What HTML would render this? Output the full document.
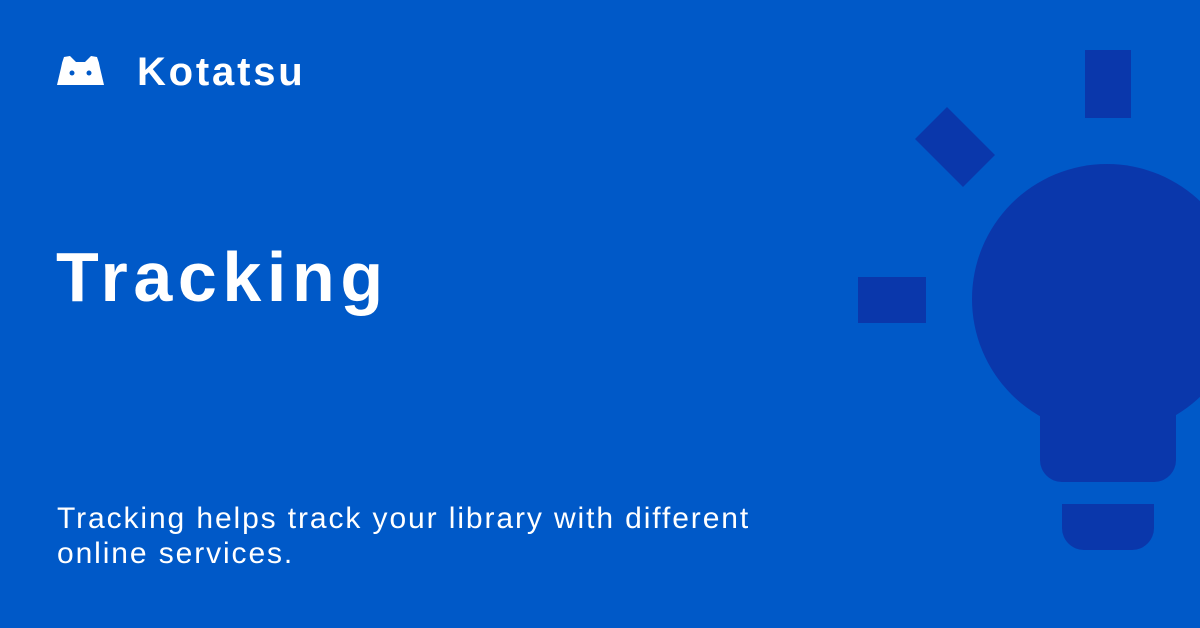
<!DOCTYPE html>
<html><head><meta charset="utf-8"><style>
html,body{margin:0;padding:0}
body{width:1200px;height:628px;background:#0059c8;position:relative;overflow:hidden;font-family:"Liberation Sans",sans-serif;color:#fff}
.t{position:absolute;white-space:nowrap}
</style></head><body>
<svg width="1200" height="628" style="position:absolute;left:0;top:0">
<g fill="#0a37ab">
<rect x="1085" y="50" width="46" height="68"/>
<polygon points="915,139 947,107 995,155 963,187"/>
<rect x="858" y="277" width="68" height="46"/>
<circle cx="1107" cy="299" r="135"/>
<path d="M1040 370 H1176 V460 a22 22 0 0 1 -22 22 H1062 a22 22 0 0 1 -22 -22 Z"/>
<path d="M1062 504 H1154 V528 a22 22 0 0 1 -22 22 H1084 a22 22 0 0 1 -22 -22 Z"/>
</g>
<g fill="#fff">
<path d="M57 85 L61 68 Q62 62 64 57 L70 56 L76 62 H85 L91 56 L97 57 Q99 62 100 68 L104 85 Z"/>
</g>
<circle cx="72" cy="73" r="2.5" fill="#0059c8"/>
<circle cx="89" cy="73" r="2.5" fill="#0059c8"/>
</svg>
<div class="t" style="left:137px;top:49px;font-size:40px;font-weight:bold;letter-spacing:2.8px;line-height:46px">Kotatsu</div>
<div class="t" style="left:56px;top:237px;font-size:70px;font-weight:bold;letter-spacing:5.6px;line-height:80px">Tracking</div>
<div class="t" style="left:57px;top:501px;font-size:30px;letter-spacing:1.9px;line-height:35px">Tracking helps track your library with different<br>online services.</div>
</body></html>
